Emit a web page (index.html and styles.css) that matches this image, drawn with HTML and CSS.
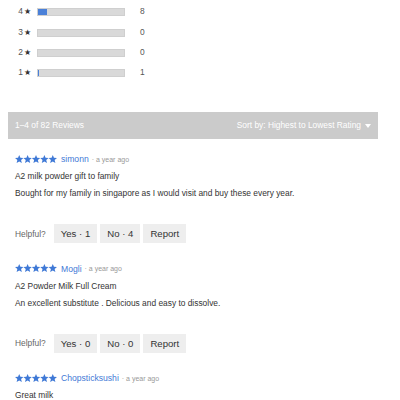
FILE: index.html
```html
<!DOCTYPE html>
<html lang="en">
<head>
<meta charset="utf-8">
<title>Reviews</title>
<link rel="stylesheet" href="styles.css">
</head>
<body>
<div class="page">
  <div class="histogram">
    <div class="hrow"><span class="hlabel">4<span class="hstar">★</span></span><span class="hbar"><span class="hfill" style="width:10%"></span></span><span class="hcount">8</span></div>
    <div class="hrow"><span class="hlabel">3<span class="hstar">★</span></span><span class="hbar"><span class="hfill" style="width:0%"></span></span><span class="hcount">0</span></div>
    <div class="hrow"><span class="hlabel">2<span class="hstar">★</span></span><span class="hbar"><span class="hfill" style="width:0%"></span></span><span class="hcount">0</span></div>
    <div class="hrow"><span class="hlabel">1<span class="hstar">★</span></span><span class="hbar"><span class="hfill" style="width:1.2%"></span></span><span class="hcount">1</span></div>
  </div>

  <div class="toolbar">
    <span class="count">1–4 of 82 Reviews</span>
    <span class="sort">Sort by: Highest to Lowest Rating <span class="caret"></span></span>
  </div>

  <div class="review">
    <div class="rhead">
      <svg class="stars" viewBox="0 0 50 10" width="42" height="8.4"><g fill="#3f79d6"><path d="M5 0l1.4 3.3 3.6.3-2.8 2.3.9 3.6L5 7.6 1.9 9.5l.9-3.6L0 3.6l3.6-.3z"/><path transform="translate(10 0)" d="M5 0l1.4 3.3 3.6.3-2.8 2.3.9 3.6L5 7.6 1.9 9.5l.9-3.6L0 3.6l3.6-.3z"/><path transform="translate(20 0)" d="M5 0l1.4 3.3 3.6.3-2.8 2.3.9 3.6L5 7.6 1.9 9.5l.9-3.6L0 3.6l3.6-.3z"/><path transform="translate(30 0)" d="M5 0l1.4 3.3 3.6.3-2.8 2.3.9 3.6L5 7.6 1.9 9.5l.9-3.6L0 3.6l3.6-.3z"/><path transform="translate(40 0)" d="M5 0l1.4 3.3 3.6.3-2.8 2.3.9 3.6L5 7.6 1.9 9.5l.9-3.6L0 3.6l3.6-.3z"/></g></svg>
      <span class="name">simonn</span>
      <span class="when">· a year ago</span>
    </div>
    <div class="rtitle">A2 milk powder gift to family</div>
    <div class="rbody">Bought for my family in singapore as I would visit and buy these every year.</div>
    <div class="helpful">
      <span class="hlp">Helpful?</span>
      <span class="btn">Yes · 1</span>
      <span class="btn">No · 4</span>
      <span class="btn">Report</span>
    </div>
  </div>

  <div class="review">
    <div class="rhead">
      <svg class="stars" viewBox="0 0 50 10" width="42" height="8.4"><g fill="#3f79d6"><path d="M5 0l1.4 3.3 3.6.3-2.8 2.3.9 3.6L5 7.6 1.9 9.5l.9-3.6L0 3.6l3.6-.3z"/><path transform="translate(10 0)" d="M5 0l1.4 3.3 3.6.3-2.8 2.3.9 3.6L5 7.6 1.9 9.5l.9-3.6L0 3.6l3.6-.3z"/><path transform="translate(20 0)" d="M5 0l1.4 3.3 3.6.3-2.8 2.3.9 3.6L5 7.6 1.9 9.5l.9-3.6L0 3.6l3.6-.3z"/><path transform="translate(30 0)" d="M5 0l1.4 3.3 3.6.3-2.8 2.3.9 3.6L5 7.6 1.9 9.5l.9-3.6L0 3.6l3.6-.3z"/><path transform="translate(40 0)" d="M5 0l1.4 3.3 3.6.3-2.8 2.3.9 3.6L5 7.6 1.9 9.5l.9-3.6L0 3.6l3.6-.3z"/></g></svg>
      <span class="name">Mogli</span>
      <span class="when">· a year ago</span>
    </div>
    <div class="rtitle">A2 Powder Milk Full Cream</div>
    <div class="rbody">An excellent substitute . Delicious and easy to dissolve.</div>
    <div class="helpful">
      <span class="hlp">Helpful?</span>
      <span class="btn">Yes · 0</span>
      <span class="btn">No · 0</span>
      <span class="btn">Report</span>
    </div>
  </div>

  <div class="review">
    <div class="rhead">
      <svg class="stars" viewBox="0 0 50 10" width="42" height="8.4"><g fill="#3f79d6"><path d="M5 0l1.4 3.3 3.6.3-2.8 2.3.9 3.6L5 7.6 1.9 9.5l.9-3.6L0 3.6l3.6-.3z"/><path transform="translate(10 0)" d="M5 0l1.4 3.3 3.6.3-2.8 2.3.9 3.6L5 7.6 1.9 9.5l.9-3.6L0 3.6l3.6-.3z"/><path transform="translate(20 0)" d="M5 0l1.4 3.3 3.6.3-2.8 2.3.9 3.6L5 7.6 1.9 9.5l.9-3.6L0 3.6l3.6-.3z"/><path transform="translate(30 0)" d="M5 0l1.4 3.3 3.6.3-2.8 2.3.9 3.6L5 7.6 1.9 9.5l.9-3.6L0 3.6l3.6-.3z"/><path transform="translate(40 0)" d="M5 0l1.4 3.3 3.6.3-2.8 2.3.9 3.6L5 7.6 1.9 9.5l.9-3.6L0 3.6l3.6-.3z"/></g></svg>
      <span class="name">Chopsticksushi</span>
      <span class="when">· a year ago</span>
    </div>
    <div class="rtitle">Great milk</div>
  </div>
</div>
</body>
</html>
```

FILE: styles.css
```css
html, body {
  margin: 0;
  padding: 0;
  background: #ffffff;
}

body {
  font-family: "Liberation Sans", Arial, sans-serif;
  color: #333333;
  font-size: 8.4px;
}

.page {
  width: 370px;
  padding: 1px 8px 0 8px;
}

.histogram {
  display: flex;
  flex-direction: column;
}

.hrow {
  height: 20.4px;
  display: flex;
  align-items: center;
}

.hlabel {
  width: 23px;
  text-align: right;
  color: #555555;
  font-size: 8.4px;
}

.hstar {
  margin-left: 1px;
  font-size: 8.4px;
  color: #333333;
}

.hbar {
  margin-left: 6px;
  width: 86px;
  height: 6px;
  background: #d9d9d9;
  border: 0.5px solid #cfcfcf;
  display: flex;
  margin-top: 2px;
}

.hfill {
  height: 100%;
  background: #4a80d8;
}

.hcount {
  margin-left: 15px;
  color: #555555;
}

.toolbar {
  margin-top: 29px;
  height: 27px;
  background: #cbcbcb;
  display: flex;
  align-items: center;
  justify-content: space-between;
  padding: 0 7px;
  color: #ffffff;
  font-size: 8.4px;
}

.sort {
  display: flex;
  align-items: center;
}

.caret {
  margin-left: 4px;
  margin-top: 1px;
  width: 0;
  height: 0;
  border-left: 3.5px solid transparent;
  border-right: 3.5px solid transparent;
  border-top: 4px solid #ffffff;
}

.review {
  padding: 12px 7px 0 7px;
  margin-bottom: 5px;
}

.rhead {
  height: 17px;
  display: flex;
  align-items: center;
}

.stars {
  display: block;
  margin-right: 4px;
}

.name {
  color: #3f79d6;
  font-size: 8.6px;
}

.when {
  color: #999999;
  font-size: 7px;
  margin-left: 3px;
}

.rtitle, .rbody {
  line-height: 17px;
  color: #333333;
}

.rtitle {
  margin-top: 0.5px;
}

.helpful {
  margin-top: 22px;
  display: flex;
  align-items: center;
  gap: 3px;
}

.hlp {
  color: #666666;
  font-size: 8.4px;
  margin-right: 5px;
}

.btn {
  height: 19px;
  padding: 0 7px;
  background: #eeeeee;
  color: #333333;
  font-size: 9.6px;
  display: flex;
  align-items: center;
}
```
